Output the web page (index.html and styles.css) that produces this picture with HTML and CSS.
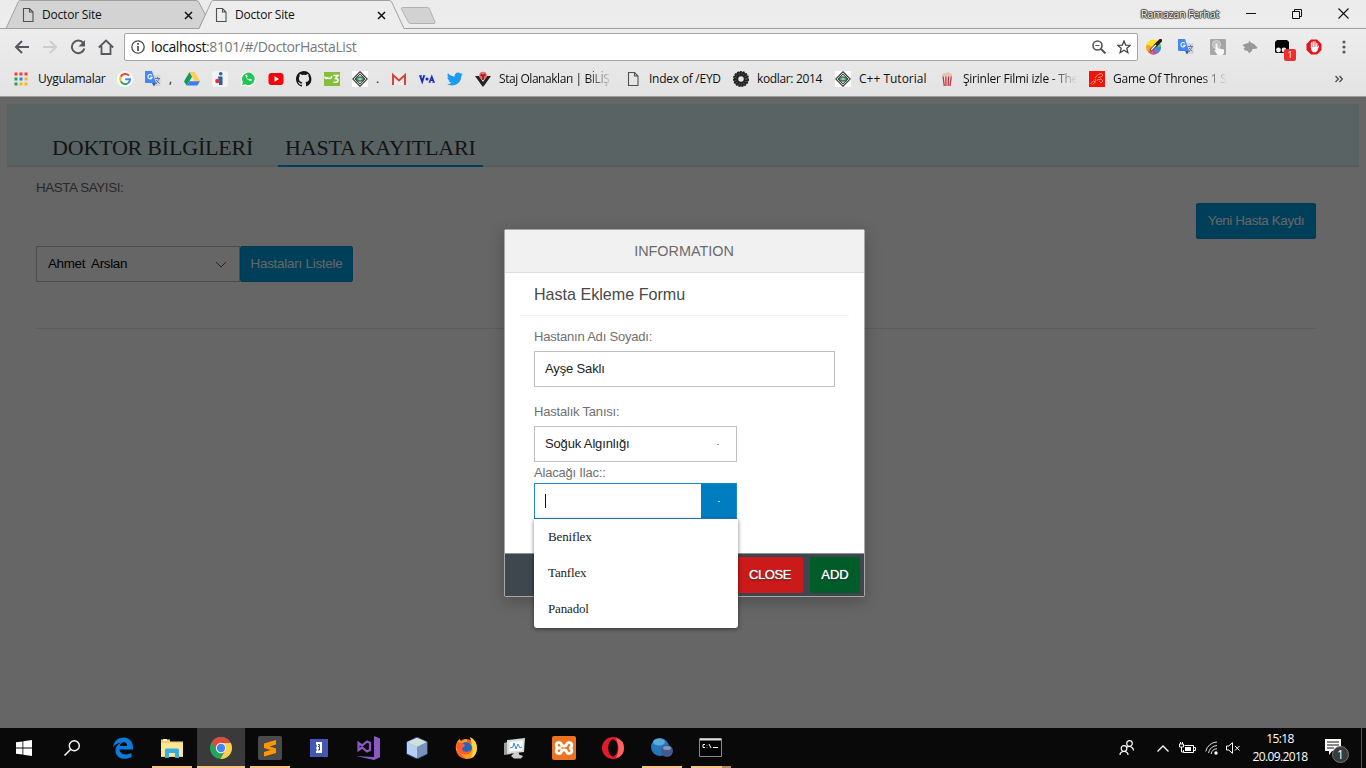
FILE: index.html
```html
<!DOCTYPE html>
<html lang="tr">
<head>
<meta charset="utf-8">
<title>Doctor Site</title>
<link rel="stylesheet" href="styles.css">
</head>
<body>
<svg class="defs" width="0" height="0">
  <defs>
    <symbol id="doc" viewBox="0 0 16 16"><path d="M3.5 1.5h6l3.5 3.5v9.500h-9.500zM9.500 1.500v3.500h3.500" fill="none" stroke="#505050" stroke-width="1.100"/></symbol>
    <symbol id="x" viewBox="0 0 9 9"><path d="M1 1l7 7M8 1l-7 7" stroke="currentColor" stroke-width="1.500"/></symbol>
    <symbol id="translate" viewBox="0 0 16 16"><path d="M7 4h8.500v11h-5z" fill="#d5d7da"/><path d="M10 7.500h5M12.500 6v1.500M11 13l3-5M11 9l3.500 3.500" stroke="#657b93" fill="none"/><path d="M0 0h7l4 12H1q-1 0-1-1z" fill="#4487f4"/><path d="M7 12h4l-2 3.500z" fill="#3358b5"/><path d="M6.800 4.300a2.200 2.200 0 1 0 .4 2H5.200" stroke="#fff" stroke-width="1.100" fill="none"/></symbol>
    <symbol id="cpp" viewBox="0 0 16 16"><path fill="#fff" d="M0 0h16v16H0z"/><path d="M8 .8L15.200 8 8 15.200.8 8z" fill="none" stroke="#444" stroke-width="1.300"/><path d="M8 3L13 8 8 13 3 8z" fill="#c3dccb" stroke="#444"/><path d="M4.500 6h7v4h-7z" fill="#579b76" stroke="#2c4a3a" stroke-width=".8"/><path d="M6.500 8h3" stroke="#fff"/></symbol>
  </defs>
</svg>

<div class="screen">
  <header class="browser">
    <div class="tabs">
      <svg class="tab-shapes" width="440" height="29" viewBox="0 0 440 29">
        <path d="M6 28.500L18.500 1.500Q19 .5 20.500.5H196Q198 .5 198.700 2L205.500 15 199 28.500z" fill="#d3d3d3" stroke="#a0a0a0"/>
        <path d="M199 29L211.500 1.500Q212 .5 214 .5H389Q391 .5 391.700 2L404 29z" fill="#ededed"/>
        <path d="M199 28.500L211.500 1.500Q212 .5 214 .5H389Q391 .5 391.700 2L404 28.500" fill="none" stroke="#a0a0a0"/>
        <path d="M402.500 7.500h25q1.500 0 2 1.500l5.500 13q.5 1.500-1 1.500h-23q-2 0-2.600-1.500L401.500 9q-.5-1.500 1-1.500z" fill="#d2d2d2" stroke="#b2b2b2"/>
      </svg>
      <div class="tab"><svg class="i16"><use href="#doc"/></svg><span class="tab-name">Doctor Site</span><svg class="tab-x"><use href="#x"/></svg></div>
      <div class="tab"><svg class="i16"><use href="#doc"/></svg><span class="tab-name">Doctor Site</span><svg class="tab-x"><use href="#x"/></svg></div>
      <div class="window-ctl">
        <span class="user">Ramazan Ferhat</span>
        <svg width="10" height="11"><path d="M0 5.500h10" stroke="#111"/></svg>
        <svg width="10" height="11" viewBox="0 0 10 11"><path d="M.5 3.500h7v7h-7zM2.500 3.500v-2h7v7h-2" fill="none" stroke="#111"/></svg>
        <svg width="11" height="11" viewBox="0 0 11 11"><path d="M.5.5l10 10M10.500.5l-10 10" stroke="#111" stroke-width="1.100"/></svg>
      </div>
    </div>
    <div class="toolbar">
      <div class="nav">
        <svg width="16" height="16" viewBox="0 0 16 16"><path d="M15 8H2M8 2L2 8l6 6" fill="none" stroke="#56585c" stroke-width="2"/></svg>
        <svg width="16" height="16" viewBox="0 0 16 16"><path d="M1 8h13M8 2l6 6-6 6" fill="none" stroke="#cdcdcd" stroke-width="2"/></svg>
        <svg width="16" height="16" viewBox="0 0 16 16"><path d="M13.300 4.200A6.300 6.300 0 1 0 14.300 9.500" fill="none" stroke="#56585c" stroke-width="2"/><path d="M15 1v6.500H8.500z" fill="#56585c"/></svg>
        <svg width="16" height="16" viewBox="0 0 16 16"><path d="M.8 8.500L8 1.500l7.200 7M3.500 7v8h9V7" fill="none" stroke="#56585c" stroke-width="1.800"/></svg>
      </div>
      <div class="omnibox">
        <svg width="14" height="14" viewBox="0 0 14 14"><circle cx="7" cy="7" r="6.200" fill="none" stroke="#4a4a4a" stroke-width="1.300"/><path d="M7 6v5M7 3v1.800" stroke="#4a4a4a" stroke-width="1.700"/></svg>
        <span class="url">localhost<span class="url-path">:8101/#/DoctorHastaList</span></span>
        <svg width="14" height="14" viewBox="0 0 14 14"><circle cx="5.500" cy="5.500" r="4.500" fill="none" stroke="#555" stroke-width="1.600"/><path d="M9 9l4.500 4.500" stroke="#555" stroke-width="2"/><path d="M3.500 5.500h4" stroke="#555"/></svg>
        <svg width="14" height="14" viewBox="0 0 14 14"><path d="M7 1l1.700 4.100 4.500.3-3.400 2.900 1.100 4.400L7 10.300l-3.900 2.400 1.100-4.400L.8 5.400l4.500-.3z" fill="none" stroke="#444" stroke-width="1.300"/></svg>
      </div>
      <div class="extensions">
        <svg width="16" height="16" viewBox="0 0 16 16"><circle cx="7.500" cy="8" r="7.500" fill="#ffe326"/><path d="M7.500 8L.5 5.500A7.500 7.500 0 0 0 2 13z" fill="#ffa21f"/><path d="M7.500 8L2 13a7.500 7.500 0 0 0 4 2.500z" fill="#f4515b"/><path d="M7.500 8L6 15.500A7.500 7.500 0 0 0 11.500 14.500z" fill="#b04cc8"/><path d="M7.500 8l4 6.500A7.500 7.500 0 0 0 15 8z" fill="#3f8be0"/><path d="M7.500 8H15a7.500 7.500 0 0 0-1.500-4.500z" fill="#56c26a"/><path d="M9.500 6.500L14.500 1.500" stroke="#222" stroke-width="3.400" stroke-linecap="round"/><path d="M4.500 11.500l5.500-5.500" stroke="#333" stroke-width="2.600"/><path d="M5 11l5-5" stroke="#fff" stroke-width="1.200"/></svg>
        <svg class="i16"><use href="#translate"/></svg>
        <svg width="16" height="16" viewBox="0 0 16 16"><rect width="16" height="16" rx="1" fill="#a6a6a6"/><circle cx="6.500" cy="5.500" r="4" fill="#bdbdbd" stroke="#d8d8d8"/><path d="M5.500 4.500h2V9l6.500 1.500V14l-1.500 2H7.500L4 11l1.500.5z" fill="#f6f6f6"/></svg>
        <svg width="16" height="16" viewBox="0 0 16 16"><path d="M.5 6L4 4.500 6.500 4 7 1.500l2 2.200L12 5l3.500 3.500-1 1.200-4 .3-.8 2-2.700 2.500-1-2.500-3-.5L1.500 9.500 3 8.500z" fill="#999"/></svg>
        <span class="ext-badged"><svg width="16" height="16" viewBox="0 0 16 16"><path d="M3 1h10l2 2v11H2L1 13V3z" fill="#050505"/><circle cx="4.500" cy="11" r="2.400" fill="#eee"/><circle cx="10" cy="11" r="2.400" fill="#eee"/></svg><b class="badge">1</b></span>
        <svg width="16" height="16" viewBox="0 0 16 16"><path d="M5 .5h6L15.500 5v6L11 15.500H5L.5 11V5z" fill="#e8131d"/><path d="M5.500 4v5M7.200 3v6M9 3v6M10.800 4.500V9" stroke="#fff" stroke-width="1.300" stroke-linecap="round"/><path d="M4.900 8h6.600l1-1.500.6.500-1.600 4.500-1.500 1.700H7l-1.500-1.700z" fill="#fff"/></svg>
        <svg width="4" height="14" viewBox="0 0 4 14"><g fill="#5a5a5a"><circle cx="2" cy="2" r="1.600"/><circle cx="2" cy="7" r="1.600"/><circle cx="2" cy="12" r="1.600"/></g></svg>
      </div>
    </div>
    <div class="bookmarks">
      <span class="bm bm-apps"><svg class="i16" viewBox="0 0 16 16"><path d="M1.500 1.500h3v3h-3zM6.500 1.500h3v3h-3zM11.500 1.500h3v3h-3z" fill="#ef4337"/><path d="M1.500 6.500h3v3h-3zM1.500 11.500h3v3h-3z" fill="#2ba14b"/><path d="M6.500 6.500h3v3h-3z" fill="#2884e8"/><path d="M11.500 6.500h3v3h-3zM6.500 11.500h3v3h-3zM11.500 11.500h3v3h-3z" fill="#f5b61c"/></svg><span class="lbl apps">Uygulamalar</span></span>
      <svg class="i16" viewBox="0 0 16 16"><circle cx="8" cy="8" r="8" fill="#fff"/><g fill="none" stroke-width="2"><path d="M12 4.700A5 5 0 0 0 3.700 5.800" stroke="#ea4335"/><path d="M3.700 5.800a5 5 0 0 0 0 4.600" stroke="#fbbc05"/><path d="M3.700 10.400A5 5 0 0 0 11.300 12" stroke="#34a853"/><path d="M11.300 12Q13 10.500 13 8.200H8.200" stroke="#4285f4"/></g></svg>
      <span class="bm"><svg class="i16"><use href="#translate"/></svg><span class="lbl tiny">,</span></span>
      <svg class="i16" viewBox="0 0 16 16"><path d="M5.500 1L0 10.500l2.700 4L8.200 5.500z" fill="#149b5b"/><path d="M5.500 1h5.200L16 10.300h-5.200z" fill="#ffcf4a"/><path d="M5.300 10.300H16l-2.700 4.200H2.700z" fill="#3f7de8"/></svg>
      <svg class="i16" viewBox="0 0 16 16"><rect width="16" height="16" rx="3" fill="#f3f3f3"/><path d="M6 5.500h4.500V14H7V7.500H6z" fill="#24659b"/><circle cx="8.700" cy="2.700" r="1.800" fill="#24659b"/><circle cx="5.500" cy="10" r="2.300" fill="#df3140"/></svg>
      <svg class="i16" viewBox="0 0 16 16"><path d="M.5 15.500l1.200-4A7.500 7.500 0 1 1 4.500 14.500z" fill="#fff"/><path d="M2 14.200l.9-3.200A6.300 6.300 0 1 1 5.200 13.300z" fill="#20c652"/><path d="M5.200 4.200q2 5.500 6 6l.7-1.700-2-1-.9 1Q7 7.500 6.800 6.200l.8-.8-.8-1.800z" fill="#fff"/></svg>
      <svg class="i16" viewBox="0 0 16 16"><rect x=".5" y="2" width="15" height="12" rx="3" fill="#f50505"/><path d="M6.500 5.300v5.400L11 8z" fill="#fff"/></svg>
      <svg class="i16" viewBox="0 0 16 16"><path fill="#161616" d="M8 0C3.580 0 0 3.580 0 8c0 3.540 2.290 6.530 5.470 7.590.4.070.55-.17.55-.38v-1.500c-2 .5-2.700-.5-2.900-1-.2-.5-.5-1-.8-1.200-.3-.2-.7-.6 0-.6.7 0 1.100.6 1.300.8.700 1.200 1.900.9 2.400.7.1-.5.3-.9.5-1.100-1.800-.2-3.600-.9-3.600-4 0-.9.300-1.600.8-2.100-.1-.2-.4-1 .1-2.100 0 0 .7-.2 2.200.8a7.600 7.600 0 0 1 4 0c1.500-1 2.200-.8 2.200-.8.400 1.100.2 1.900.1 2.100.5.600.8 1.300.8 2.100 0 3.100-1.900 3.700-3.700 3.900.3.300.6.800.6 1.500v2.200c0 .2.100.5.500.4A8 8 0 0 0 8 0z"/></svg>
      <svg class="i16" viewBox="0 0 16 16"><path fill="#84be3b" d="M0 1h16v14H0z"/><path d="M1 5.500v1q1 2 2.500 0V6M3.500 6.500q1.500 2 4 0V5M9.500 4.500h4.500L11.500 7.500q2.800.2 2.500 2.300-.5 2-4.500 1.200" fill="none" stroke="#fff" stroke-width="1.500"/></svg>
      <span class="bm"><svg class="i16"><use href="#cpp"/></svg><span class="lbl tiny">.</span></span>
      <svg class="i16" viewBox="0 0 16 16"><path fill="#ececec" d="M1 3h14v11H1z"/><path d="M2 14V4l6 5.500L14 4v10" fill="none" stroke="#d7453a" stroke-width="2"/></svg>
      <svg class="i16" viewBox="0 0 16 16"><path d="M1.200 5l2 5.500L5 5" fill="none" stroke="#152cbb" stroke-width="1.900"/><path d="M10.500 11l2.300-5.500 2 5.500M11.500 9.300h2.500" fill="none" stroke="#152cbb" stroke-width="1.500"/><path d="M0 4.800h3M4 4.800h2.300M9.700 11.200h2M13.300 11.200H16" stroke="#152cbb"/><circle cx="8" cy="8" r="1.500" fill="#152cbb"/></svg>
      <svg class="i16" viewBox="0 0 16 16"><path fill="#1b9cf0" d="M16 3.500l-1.700 1.600C14.500 11 9.800 14.500 5 14.500c-2 0-3.600-.5-5-1.400 1.700.1 3.300-.3 4.600-1.300-1.400-.1-2.500-1-3-2.300h1.300C1.400 9 .4 7.800.4 6.200l1.400.4C.5 5.600.1 3.700 1 2.200c1.600 2 4 3.200 6.700 3.400C7.300 3.400 8.900 1.500 11 1.500c1 0 1.800.4 2.400 1l2-.7-1.300 1.800z"/></svg>
      <span class="bm"><svg class="i16" viewBox="0 0 16 16"><path d="M0 5h4l4 6 4-6h4L8.500 15.500h-1z" fill="#222"/><circle cx="8" cy="4.500" r="3.800" fill="#e4706c"/><path d="M5.500 3.500q2.500 2 5 0M8 5v4" stroke="#b71720" stroke-width="1.900" fill="none"/></svg><span class="lbl staj fade">Staj Olanakları | BİLİŞ</span></span>
      <span class="bm"><svg class="i16"><use href="#doc"/></svg><span class="lbl index">Index of /EYD</span></span>
      <span class="bm"><svg class="i16" viewBox="0 0 16 16"><circle cx="8" cy="8" r="5" fill="none" stroke="#222" stroke-width="4.500"/><circle cx="8" cy="8" r="7.300" fill="none" stroke="#222" stroke-width="1.500" stroke-dasharray="2 1"/><circle cx="8" cy="8" r="5.400" fill="none" stroke="#777" stroke-width="2" stroke-dasharray=".5 2"/></svg><span class="lbl kodlar">kodlar: 2014</span></span>
      <span class="bm"><svg class="i16"><use href="#cpp"/></svg><span class="lbl tutorial">C++ Tutorial</span></span>
      <span class="bm"><svg class="i16" viewBox="0 0 16 16"><path d="M3 5h10l-1.500 10h-7z" fill="#f4e2e2"/><path d="M4 5l1.300 10M6.800 5l.2 10M9.500 5l-.3 10M12.200 5L11 15" stroke="#b9333a" stroke-width="1.300"/><path d="M3 5.500V3.500L5 2l2 .5L9 1l2 1 2 1.500v2z" fill="#dfc7ad"/></svg><span class="lbl movie fade">Şirinler Filmi izle - The</span></span>
      <span class="bm"><svg class="i16" viewBox="0 0 16 16"><path fill="#f01508" d="M0 0h16v16H0z"/><path d="M1.500 13l3-3 2 1-3 2.500M6 7l3-3.500 3-1 2 1.500-2 2-3 .5M8 9l4-1 2 2-2 2-2-2M7 10l-1-2" fill="none" stroke="#ff9c84" stroke-width=".9"/></svg><span class="lbl got fade">Game Of Thrones 1 S</span></span>
      <svg class="more" width="8" height="8" viewBox="0 0 8 8"><path d="M.5 1l2.800 3L.5 7M4.500 1l2.800 3-2.800 3" fill="none" stroke="#505050" stroke-width="1.400"/></svg>
    </div>
  </header>

  <main class="page">
    <nav class="page-tabs">
      <span class="page-tab">DOKTOR BİLGİLERİ</span>
      <span class="page-tab active">HASTA KAYITLARI</span>
    </nav>
    <section class="content">
      <p class="count">HASTA SAYISI:</p>
      <div class="new-row"><button class="btn btn-new">Yeni Hasta Kaydı</button></div>
      <div class="filter">
        <div class="select"><span class="select-value">Ahmet&nbsp; Arslan</span><svg width="12" height="7" viewBox="0 0 12 7"><path d="M1 1l5 5 5-5" fill="none" stroke="#555"/></svg></div>
        <button class="btn btn-list">Hastaları Listele</button>
      </div>
      <hr class="rule">
    </section>

    <div class="scrim">
      <div class="dialog">
        <div class="dialog-head">INFORMATION</div>
        <div class="dialog-body">
          <h2 class="form-title">Hasta Ekleme Formu</h2>
          <div class="form">
            <label class="label">Hastanın Adı Soyadı:</label>
            <div class="field wide">Ayşe Saklı</div>
            <label class="label second">Hastalık Tanısı:</label>
            <div class="field combo"><span>Soğuk Algınlığı</span><i class="dot"></i></div>
            <label class="label third">Alacağı Ilac::</label>
            <div class="field combo open"><i class="caret"></i><span class="combo-btn"><i class="dot light"></i></span>
              <ul class="menu"><li>Beniflex</li><li>Tanflex</li><li>Panadol</li></ul>
            </div>
          </div>
        </div>
        <div class="dialog-foot"><button class="act close">CLOSE</button><button class="act add">ADD</button></div>
      </div>
    </div>
  </main>

  <footer class="taskbar">
    <span class="task"><svg width="16" height="16" viewBox="0 0 16 16"><path fill="#fff" d="M0 2.300L6.500 1.400v6.200H0zM7.300 1.300L16 0v7.600H7.300zM0 8.400h6.500v6.200L0 13.700zM7.300 8.400H16V16l-8.700-1.300z"/></svg></span>
    <span class="task search"><svg width="16" height="16" viewBox="0 0 16 16"><circle cx="10.300" cy="5.700" r="5" fill="none" stroke="#fff" stroke-width="1.400"/><path d="M6.800 9.200L.5 15.500" stroke="#fff" stroke-width="1.500"/></svg></span>
    <span class="task"><svg width="22" height="22" viewBox="0 0 22 22"><path d="M1 10C2 4 6 .5 11.500.5 17.500.5 21 5 21 10v2.500H7.500C8 18 15 18.500 19.500 16v4C13 23.500 3.500 22 3.500 13.500 3.500 10 6 7 9 5.700 5 6 2.500 8 1 10zM7.700 9h7.500c0-5-6.500-5-7.500 0z" fill="#087cdc"/></svg></span>
    <span class="task run"><svg width="22" height="20" viewBox="0 0 22 20"><path d="M0 1.500h9v2h13V19H0z" fill="#f4cf6b"/><path d="M0 5h22v13H0z" fill="#fde69a"/><path d="M2 1h4v2H2z" fill="#fff5c4"/><path d="M4 20v-8q0-1.500 1.500-1.500h11q1.500 0 1.500 1.500v8h-4v-5H8v5z" fill="#36aee2"/></svg></span>
    <span class="task run current"><svg width="22" height="22" viewBox="0 0 22 22"><circle cx="11" cy="11" r="11" fill="#28a35a"/><path d="M11 6h9.800A11 11 0 0 1 10.500 22L15.500 13z" fill="#fdcf4c"/><path d="M1.700 5.200A11 11 0 0 1 20.800 6H11L6 12z" fill="#dd4b3e"/><circle cx="11" cy="11" r="5.200" fill="#f3f3f3"/><circle cx="11" cy="11" r="4.200" fill="#4287ef"/></svg></span>
    <span class="task run"><svg width="24" height="24" viewBox="0 0 24 24"><rect width="24" height="24" rx="2" fill="#4a4a4a"/><path d="M18 4v4.500l-6.500 2L18 12.500V17l-12 3.500V16l6.500-2L6 12V7.500z" fill="#ff9800"/></svg></span>
    <span class="task"><svg width="18" height="18" viewBox="0 0 18 18"><path d="M0 0h18v18H0z" fill="#4557b5"/><path d="M6 3h6v11H6v-2l1-1-1-2 1-2-1-2z" fill="#fff"/><path d="M8 5.500h1.500v2H8M9.500 8v3H8" stroke="#333" fill="none" stroke-width=".9"/></svg></span>
    <span class="task"><svg width="24" height="24" viewBox="0 0 24 24"><path d="M18 0l6 2.500v18.700L18 24 0 20l18 1z" fill="#8a5ac2"/><path d="M2.500 7v7L6 11.500l5 4L14 14V7l-3-1.500-5 4z" fill="none" stroke="#8a5ac2" stroke-width="2.200"/></svg></span>
    <span class="task"><svg width="22" height="22" viewBox="0 0 22 22"><path d="M11 0l10.500 5v12L11 22 .5 17V5z" fill="#7e9bc3" stroke="#26366c"/><path d="M11 .8L21 5l-10 5L1 5z" fill="#cbe1d9"/><path d="M1 5l10 5v11L1 16.500z" fill="#b6d0ef"/><path d="M21 5l-10 5v11l10-4.500z" fill="#7891bd"/></svg></span>
    <span class="task"><svg width="22" height="22" viewBox="0 0 22 22"><circle cx="11" cy="12" r="10" fill="#ff5530"/><path d="M1 13C0 7 3 3 5 2l1 3 4-3q3 0 2 3l5 2q1-5-2-7 7 3 7 12-1 10-11 10z" fill="#ff9f20"/><path d="M15 0q7 4 7 12-1 7-6 9 3-7 1-13z" fill="#ffda39"/><circle cx="11" cy="11" r="6" fill="#2664bd"/><path d="M1 9l2-4 4 1 3 2-1 2-2 1 1 3 4 1 4-2q-2 6-8 4Q2 16 1 9z" fill="#ff5b2f"/></svg></span>
    <span class="task"><svg width="24" height="22" viewBox="0 0 24 22"><path d="M1 6l7-2v13l-7 1z" fill="#999d9c"/><path d="M4 3l18-2-1 14-17 2z" fill="#d5dcdc"/><path d="M6.500 5L20 3.500l-.7 10L6 14.500z" fill="#f8fcff"/><path d="M7 11l3-1 1-4 2 6 2-5 2 4 2-1" fill="none" stroke="#3f91bf"/><path d="M11 16l5-.5v2l4 1.500-2 2.500H11L8 19z" fill="#c9cdcc"/></svg></span>
    <span class="task"><svg width="24" height="24" viewBox="0 0 24 24"><rect width="24" height="24" rx="2" fill="#ec7322"/><path d="M9.500 12H7a2.700 2.700 0 1 1 2.500-3.500q0 1.500 2.500 1.500t2.500-1.500A2.700 2.700 0 1 1 17 12a2.700 2.700 0 1 1-2.500 3.500Q14.500 14 12 14t-2.500 1.500A2.700 2.700 0 1 1 7 12" fill="none" stroke="#fff" stroke-width="2.800"/></svg></span>
    <span class="task"><svg width="22" height="22" viewBox="0 0 22 22"><circle cx="11" cy="11" r="11" fill="#e51a2b"/><path d="M14 1q8 2 8 10t-8 10q5-10 0-20z" fill="#ff6260"/><ellipse cx="11" cy="11" rx="4.800" ry="8.500" fill="#0a0a0a"/></svg></span>
    <span class="task run"><svg width="24" height="22" viewBox="0 0 24 22"><circle cx="10" cy="10" r="9" fill="#2378bb"/><ellipse cx="9" cy="5" rx="6" ry="3.500" fill="#5baad9"/><circle cx="17" cy="14" r="6" fill="#435990"/><ellipse cx="17" cy="11" rx="4" ry="2" fill="#8795b9"/></svg></span>
    <span class="task run multi"><svg width="24" height="20" viewBox="0 0 24 20"><path d="M.5.5h22v18H.5z" fill="#050505" stroke="#888"/><path d="M1 1.500h21" stroke="#ddd" stroke-width="2"/><path d="M6 6.500H4v3h2M8 7v.5M8 9v.5M10 6l2 4M14 9.500h5" fill="none" stroke="#fff"/></svg></span>
    <div class="tray">
      <svg width="16" height="16" viewBox="0 0 16 16"><g fill="none" stroke="#fff" stroke-width="1.200"><circle cx="10.500" cy="3.500" r="2.800"/><circle cx="5" cy="8.500" r="2.800"/><path d="M1 15q0-3.500 4-3.500T9 15M7.500 7.500q3-2 5.500 0 1.500 1.200 1.500 3"/></g></svg>
      <svg class="up" width="12" height="7" viewBox="0 0 12 7"><path d="M.5 6.500L6 1l5.500 5.500" fill="none" stroke="#fff" stroke-width="1.300"/></svg>
      <svg class="bat" width="17" height="13" viewBox="0 0 17 13"><path d="M5.500 3.500h9v7h-10V8M15 5.500h1.500v3H15" fill="none" stroke="#fff"/><path d="M6 5h6v4H6z" fill="#fff"/><path d="M.5 2v3h4V2zM1.500 0v2M3.500 0v2M2.500 5v5h2" fill="none" stroke="#fff"/></svg>
      <svg class="wifi" width="14" height="14" viewBox="0 0 14 14"><g fill="none" stroke="#ddd"><path d="M.7 10.500A12 12 0 0 1 12 1"/><path d="M3.500 12A9 9 0 0 1 12 4.500"/><path d="M6.200 13A6 6 0 0 1 12 7.800"/></g><circle cx="11" cy="12" r="1.700" fill="#fff"/></svg>
      <svg class="vol" width="15" height="12" viewBox="0 0 15 12"><path d="M.5 4h2.200L6.500.7v10.600L2.700 8H.5zM9 4l4.500 4.500M13.500 4L9 8.500" fill="none" stroke="#fff"/></svg>
      <div class="clock"><span class="time">15:18</span><span class="date">20.09.2018</span></div>
      <span class="notify"><svg width="16" height="16" viewBox="0 0 16 16"><path d="M0 0h16v12H7l-3 4v-4H0z" fill="#fff"/><path d="M2 3h12M2 6h12M2 9h7" stroke="#111"/></svg><b class="notify-n">1</b></span>
      <i class="peek"></i>
    </div>
  </footer>
</div>
</body>
</html>
```
FILE: styles.css
```css
* { box-sizing: border-box; }
body { margin: 0; font-family: "Open Sans", "Noto Sans", sans-serif; font-size: 12px; color: #111; overflow: hidden; }
svg { flex: none; display: block; }
.defs { position: absolute; }
button { border: 0; padding: 0; font-family: inherit; }
.i16 { width: 16px; height: 16px; }
.screen { width: 1366px; height: 768px; display: flex; flex-direction: column; }

/* browser */
.browser { height: 97px; background: linear-gradient(#ebebeb, #ededed 29px, #e3e3e3); border-bottom: 1px solid #9c9c9c; display: flex; flex-direction: column; }
.tabs { position: relative; height: 29px; display: flex; align-items: center; border-bottom: 1px solid #a0a0a0; padding-left: 20px; }
.tab-shapes { position: absolute; left: 0; top: 0; }
.tab { position: relative; width: 193px; display: flex; align-items: center; padding-top: 2px; }
.tab-name { margin-left: 6px; width: 142px; letter-spacing: -.2px; line-height: 16px; }
.tab-x { width: 9px; height: 9px; }
.window-ctl { margin-left: auto; display: flex; align-items: center; padding-right: 17px; margin-top: -1px; }
.user { font-size: 11px; color: #fff; letter-spacing: -.35px; text-shadow: 0 0 1px #000, 1px 0 1px #444, -1px 0 1px #444, 0 1px 1px #444, 0 -1px 1px #444; margin-right: 27px; }
.window-ctl svg { margin-right: 36px; }
.window-ctl svg:last-child { margin-right: 0; }
.toolbar { height: 36px; display: flex; align-items: center; padding-left: 14px; }
.nav { display: flex; gap: 12px; width: 110px; }
.omnibox { width: 1014px; height: 28px; background: #fff; border: 1px solid #a6a6a6; border-radius: 2px; display: flex; align-items: center; padding: 0 6px; }
.url { flex: 1; margin-left: 6px; font-size: 14px; letter-spacing: -.4px; line-height: 20px; }
.url-path { color: #777; }
.omnibox svg + svg { margin-left: 11px; }
.extensions { display: flex; align-items: center; gap: 16px; margin-left: 8px; }
.extensions svg:last-child { margin-left: 4px; }
.ext-badged { position: relative; }
.ext-badged svg { margin: 0; }
.badge { position: absolute; left: 10px; top: 10px; width: 12px; height: 12px; background: #ed2f31; color: #fff; border-radius: 2px; font-size: 9px; line-height: 12px; font-weight: 400; text-align: center; }
.bookmarks { height: 31px; display: flex; align-items: center; gap: 12px; padding: 0 0 3px 13px; }
.bm { display: flex; align-items: center; gap: 8px; }
.bm-apps { gap: 9px; }
.lbl { white-space: nowrap; line-height: 18px; letter-spacing: -.25px; }
.apps { width: 67px; letter-spacing: -.3px; }
.tiny { width: 4px; margin-right: -1px; }
.staj, .movie, .got { width: 114px; }
.staj { letter-spacing: -.45px; }
.index { width: 72px; }
.kodlar { width: 66px; letter-spacing: -.35px; }
.tutorial { width: 68px; letter-spacing: 0; }
.fade { -webkit-mask-image: linear-gradient(90deg, #000 88px, transparent 114px); mask-image: linear-gradient(90deg, #000 88px, transparent 114px); }
.more { margin: 0 23px 0 auto; }

/* page */
.page { position: relative; height: 631px; background: #fff; padding: 7px; font-family: "Liberation Sans", Arial, sans-serif; }
.page-tabs { height: 63px; background: #dff7fa; border-bottom: 2px solid #e0e0e0; display: flex; align-items: flex-end; padding-left: 38px; gap: 19px; }
.page-tab { width: 214px; padding-left: 7px; height: 37px; margin-bottom: -2px; line-height: 35px; font-family: "Liberation Serif", "Times New Roman", serif; font-size: 22px; letter-spacing: -.2px; color: #333; white-space: nowrap; }
.page-tab.active { width: 205px; border-bottom: 2px solid #009de0; }
.content { padding: 13px 43px 0 29px; display: flex; flex-direction: column; }
.count { margin: 0; height: 23px; line-height: 16px; font-size: 13.4px; letter-spacing: -.4px; color: #666; }
.new-row { display: flex; justify-content: flex-end; }
.btn { height: 36px; background: #009de0; color: #fff; border: 1px solid #0092d1; border-radius: 2px; font-size: 13.4px; white-space: nowrap; padding-bottom: 2px; }
.btn-new { width: 120px; letter-spacing: -.37px; }
.filter { display: flex; margin-top: 7px; }
.select { width: 204px; height: 36px; border: 1px solid #bfbfbf; display: flex; align-items: center; justify-content: space-between; padding: 0 12px 0 11px; }
.select-value { font-size: 13.4px; letter-spacing: -.33px; color: #000; padding-bottom: 2px; }
.btn-list { width: 113px; letter-spacing: -.24px; }
.rule { width: 100%; height: 1px; border: 0; background: #e5e5e5; margin: 46px 0 0; }

/* dialog */
.scrim { position: absolute; inset: 0; background: rgba(0, 0, 0, .6); display: flex; justify-content: center; align-items: flex-start; padding: 132px 0 0 3px; }
.dialog { width: 361px; height: 368px; border: 1px solid #a4a8a8; border-radius: 2px; background: #fff; box-shadow: 0 4px 16px rgba(0, 0, 0, .25); display: flex; flex-direction: column; }
.dialog-head { height: 43px; background: #f1f1f1; border-bottom: 1px solid #ddd; color: #6b6b6b; font-size: 14.4px; line-height: 42px; text-align: center; padding-right: 1px; }
.dialog-body { flex: 1; padding: 0 15px; }
.form-title { margin: 0; height: 43px; line-height: 43px; padding-left: 14px; font-size: 16.1px; font-weight: 400; color: #4a4a4a; border-bottom: 1px solid #f3f3f3; }
.form { padding: 12px 14px 0; display: flex; flex-direction: column; }
.label { font-size: 13px; line-height: 17px; letter-spacing: -.2px; color: #707070; height: 23px; }
.field { height: 36px; border: 1px solid #bfbfbf; padding: 0 10px; font-size: 13px; letter-spacing: -.15px; line-height: 34px; color: #222; }
.wide { width: 301px; }
.second { margin-top: 16px; }
.combo { width: 203px; display: flex; align-items: center; justify-content: space-between; padding-right: 17px; }
.dot { width: 2px; height: 1px; background: #aaa; }
.third { height: 21px; padding-top: 2px; }
.open { position: relative; border-color: #2187c9; padding-right: 0; }
.caret { width: 1px; height: 14px; background: #111; }
.combo-btn { width: 35px; height: 34px; background: #007cc0; display: flex; align-items: center; justify-content: center; }
.dot.light { background: #b8ddf1; }
.menu { position: absolute; z-index: 2; left: -1px; top: 35px; width: 204px; height: 109px; margin: 0; padding: 0; list-style: none; background: #fff; border-radius: 0 0 3px 3px; box-shadow: 0 1px 4px rgba(0, 0, 0, .5); font-family: "Liberation Serif", "Times New Roman", serif; font-size: 13px; letter-spacing: -.15px; }
.menu li { height: 36px; line-height: 36px; padding-left: 14px; }
.dialog-foot { height: 43px; background: #3e464e; border-top: 1px solid #8f9699; display: flex; justify-content: flex-end; gap: 7px; padding: 3px 4px 0 0; }
.act { height: 36px; padding-bottom: 2px; color: #fff; font-size: 13px; border-radius: 2px; text-shadow: 0 0 1px rgba(255, 255, 255, .8), 0 1px 2px #222; }
.close { width: 66px; background: #cc1a1a; letter-spacing: -.4px; }
.add { width: 50px; background: #005c29; }

/* taskbar */
.taskbar { height: 40px; background: #090909; display: flex; color: #fff; }
.task { width: 48px; height: 40px; display: flex; align-items: center; justify-content: center; position: relative; margin-right: 1px; }
.task:first-child { margin-right: 0; }
.search { margin-right: 3px; }
.run::after { content: ""; position: absolute; left: 4px; right: 4px; bottom: 0; height: 2px; background: #f9c583; }
.current { background: #3a3a3a; }
.current::after { left: 0; right: 0; }
.multi::after { background: linear-gradient(90deg, #f9c583 31px, #b58b55 31px); }
.tray { margin-left: auto; display: flex; align-items: center; width: 247px; }
.up { margin-left: 22px; }
.bat { margin-left: 10px; }
.wifi { margin-left: 9px; }
.vol { margin-left: 7px; }
.clock { width: 58px; margin-left: 10px; display: flex; flex-direction: column; align-items: center; line-height: 18px; white-space: nowrap; letter-spacing: -.6px; }
.notify { position: relative; margin-left: 16px; margin-top: -2px; }
.notify-n { position: absolute; left: 7px; top: 7px; width: 17px; height: 17px; border-radius: 50%; background: #3a3a3a; border: 1px solid #777; font-size: 12px; font-weight: 400; line-height: 15px; text-align: center; }
.peek { width: 1px; height: 40px; background: #555; margin-left: 20px; }
```
